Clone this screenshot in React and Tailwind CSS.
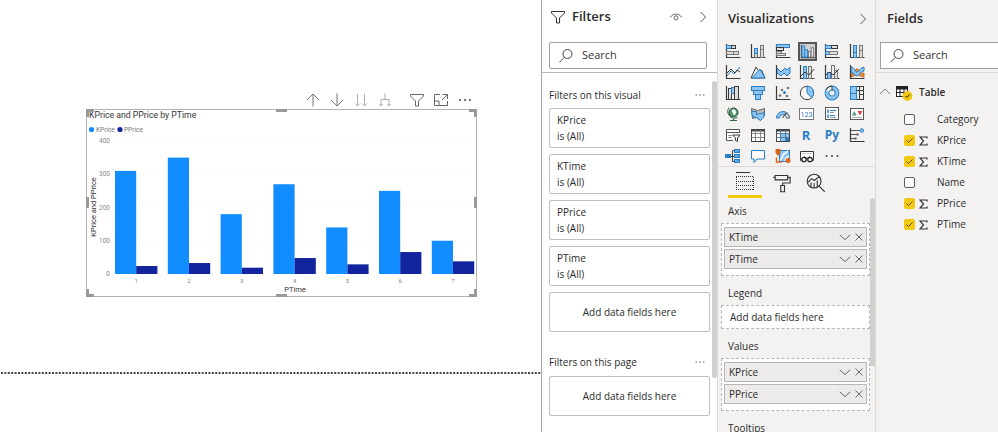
import React, { useState } from "react";

const INK = "#3a3a3a";
const BLUE = "#2a7fc4";
const SKY = "#8cc4f2";
const GREY = "#bdbab7";

/* ---------- chart data ---------- */

const DATA = [
  { time: 1, k: 310, p: 24 },
  { time: 2, k: 350, p: 33 },
  { time: 3, k: 180, p: 19 },
  { time: 4, k: 270, p: 48 },
  { time: 5, k: 140, p: 29 },
  { time: 6, k: 250, p: 66 },
  { time: 7, k: 100, p: 38 },
];

const BASE = 165;
const scale = (v) => (v * 133) / 400;

function Chart() {
  return (
    <svg viewBox="0 0 391 188" className="block w-full" role="img" aria-label="KPrice and PPrice by PTime" fontFamily="Roboto, sans-serif">
      <rect x="0.5" y="0.5" width="390" height="187" fill="white" stroke="#b3b3b3" />
      <text x="3" y="9" fontSize="8.7" fill="#333">KPrice and PPrice by PTime</text>
      <circle cx="5.500" cy="20.500" r="2.600" fill="#118dff" />
      <text x="10" y="23" fontSize="6.500" fill="#777">KPrice</text>
      <circle cx="34" cy="20.500" r="2.600" fill="#12239e" />
      <text x="38" y="23" fontSize="6.500" fill="#777">PPrice</text>
      {[0, 100, 200, 300, 400].map((v) => (
        <g key={v}>
          {v > 0 && <line x1="29" x2="388" y1={BASE - scale(v)} y2={BASE - scale(v)} stroke="#ededed" strokeDasharray="1 3" />}
          <text x="24" y={BASE - scale(v) + 2} fontSize="6.500" fill="#888" textAnchor="end">{v}</text>
        </g>
      ))}
      {DATA.map((d, i) => {
        const x = 29 + i * 52.8;
        return (
          <g key={d.time}>
            <rect x={x} y={BASE - scale(d.k)} width="21.200" height={scale(d.k)} fill="#118dff" />
            <rect x={x + 21.2} y={BASE - scale(d.p)} width="21.200" height={scale(d.p)} fill="#12239e" />
            <text x={x + 21.2} y="174" fontSize="6" fill="#888" textAnchor="middle">{d.time}</text>
          </g>
        );
      })}
      <text x="209" y="183" fontSize="7.500" fill="#333" textAnchor="middle">PTime</text>
      <text transform="translate(9.500 98) rotate(-90)" fontSize="7.500" fill="#333" textAnchor="middle">KPrice and PPrice</text>
      <g fill="#999">
        <path d="M0 0h8v3H3v5H0zM391 0h-8v3h5v5h3zM0 188h8v-3H3v-5H0zM391 188h-8v-3h5v-5h3z" />
        <rect x="190" y="0" width="11" height="3" />
        <rect x="190" y="185" width="11" height="3" />
        <rect x="0" y="88" width="3" height="11" />
        <rect x="388" y="88" width="3" height="11" />
      </g>
    </svg>
  );
}

/* ---------- small glyphs ---------- */

function Glyph({ children, className = "size-4", color = "#555", width = 1 }) {
  return (
    <svg viewBox="0 0 16 16" className={`block shrink-0 ${className}`} fill="none" stroke={color} strokeWidth={width} aria-hidden="true">
      {children}
    </svg>
  );
}

const Funnel = (props) => (
  <Glyph {...props}>
    <path d="M1.500 2.500h13v1.500L9.500 9v5h-3V9L1.500 4z" />
  </Glyph>
);
const Magnifier = () => (
  <Glyph className="size-4" color="#444">
    <circle cx="9.500" cy="6" r="4.500" />
    <path d="M6.300 9.300L1.500 14.200" />
  </Glyph>
);
const Dots = ({ color = "#777", className = "size-4" }) => (
  <Glyph color="none" className={className}>
    <g fill={color}>
      <circle cx="3" cy="8" r="1.100" />
      <circle cx="8" cy="8" r="1.100" />
      <circle cx="13" cy="8" r="1.100" />
    </g>
  </Glyph>
);
const ChevronRight = () => (
  <Glyph color="#555" className="size-4">
    <path d="M5.500 3l5 5-5 5" />
  </Glyph>
);

const VISUAL_TOOLS = [
  ["Drill up", <Glyph key="a" color="#777"><path d="M8 14.500V2M2 8l6-6 6 6" /></Glyph>],
  ["Drill down", <Glyph key="b" color="#777"><path d="M8 1.500V14M2 8l6 6 6-6" /></Glyph>],
  ["Next level", <Glyph key="c" color="#b0b0b0"><path d="M4.500 2v12M2 11.500L4.500 14 7 11.500M11.500 2v12M9 11.500l2.500 2.500 2.500-2.500" /></Glyph>],
  ["Expand all", <Glyph key="d" color="#b0b0b0"><path d="M8 1.500v6M4 14V7.500h8V14M2 12l2 2 2-2M10 12l2 2 2-2" /></Glyph>],
];

/* ---------- visualization icons ---------- */

const axes = <path d="M1.500 1v13.500H15.500" stroke={INK} strokeWidth="1.200" />;

const VISUALS = [
  ["Stacked bar chart", <>{axes}<rect x="1.500" y="2.500" width="5" height="3" fill={SKY} stroke={BLUE} /><rect x="6.500" y="2.500" width="4" height="3" fill="#ddd" stroke={INK} /><rect x="1.500" y="8.500" width="7" height="3" fill="#ddd" stroke="#777" /><rect x="8.500" y="8.500" width="5" height="3" fill="#ddd" stroke="#777" /></>],
  ["Stacked column chart", <>{axes}<rect x="4.500" y="9.500" width="3" height="5" fill="#ddd" stroke="#666" /><rect x="4.500" y="5.500" width="3" height="5" fill={SKY} stroke={BLUE} /><rect x="10.500" y="6.500" width="3" height="8" fill="#ddd" stroke="#777" /><rect x="10.500" y="2.500" width="3" height="4" fill="#ddd" stroke="#777" /></>],
  ["Clustered bar chart", <>{axes}<rect x="1.500" y="1.500" width="13" height="3" fill={SKY} stroke={BLUE} /><rect x="1.500" y="4.500" width="7" height="3" fill="#ddd" stroke={INK} /><rect x="1.500" y="8.500" width="5" height="2" fill="#ddd" stroke="#777" /><rect x="1.500" y="10.500" width="9" height="2" fill="#ddd" stroke="#777" /></>],
  ["Clustered column chart", <>{axes}<rect x="2" y="2" width="3" height="12" fill={SKY} stroke={BLUE} /><rect x="5" y="6" width="3" height="8" fill={SKY} stroke={BLUE} /><rect x="9" y="8" width="2.500" height="6" fill="#eee" stroke="#777" /><rect x="12" y="4" width="2.500" height="10" fill="#eee" stroke="#777" /></>],
  ["100% stacked bar chart", <>{axes}<rect x="1.500" y="2.500" width="6" height="3" fill={SKY} stroke={BLUE} /><rect x="7.500" y="2.500" width="6" height="3" fill="#ddd" stroke={INK} /><rect x="1.500" y="8.500" width="4" height="3" fill={SKY} stroke={BLUE} /><rect x="5.500" y="8.500" width="8" height="3" fill="#ddd" stroke="#777" /></>],
  ["100% stacked column chart", <>{axes}<rect x="4.500" y="2.500" width="3" height="7" fill={SKY} stroke={BLUE} /><rect x="4.500" y="9.500" width="3" height="5" fill={SKY} stroke={BLUE} /><rect x="10.500" y="2.500" width="3" height="5" fill="#ddd" stroke="#777" /><rect x="10.500" y="7.500" width="3" height="7" fill="#ddd" stroke="#777" /></>],
  ["Line chart", <>{axes}<path d="M2 12l4-5 3 3 6-7" stroke={BLUE} /><path d="M2 9l4-4 4 4 2-3 3 2" stroke={INK} /></>],
  ["Area chart", <><path d="M1 14L6 3l4 6 1.500-3L15 14z" fill="#f4f4f4" stroke={INK} /><path d="M2 14l8-9 5 9z" fill={SKY} stroke={BLUE} /></>],
  ["Stacked area chart", <><path d="M2 4l4 4 4-4 2 2 3-3v6l-3 3-3-3-3 3-4-3z" fill={SKY} stroke={BLUE} />{axes}</>],
  ["Line and stacked column chart", <>{axes}<rect x="4.500" y="2.500" width="3" height="12" fill={SKY} stroke={BLUE} /><rect x="9.500" y="2.500" width="3" height="12" fill="#ddd" stroke="#777" /><path d="M2 12l4-4 4 3 5-6" stroke={INK} /></>],
  ["Line and clustered column chart", <>{axes}<rect x="3.500" y="8.500" width="3" height="6" fill={SKY} stroke={BLUE} /><rect x="7.500" y="1.500" width="3" height="13" fill="#eee" stroke="#777" /><rect x="10.500" y="6.500" width="3" height="8" fill="#ddd" stroke="#777" /><path d="M2 11l3-3 4 3 6-6" stroke={INK} /></>],
  ["Ribbon chart", <><path d="M2 10c4 0 3-5 6-5s3 5 7 4v4c-4 0-5-3-7-3s-3 3-6 3z" fill="#e8913a" stroke="#c4661f" /><path d="M2 3c4 0 3 5 6 5s3-5 7-5v4c-4 0-4 5-7 5s-3-4-6-4z" fill={SKY} stroke={BLUE} />{axes}</>],
  ["Waterfall chart", <>{axes}<rect x="3.500" y="3.500" width="3" height="11" fill="#ddd" stroke={INK} /><rect x="6.500" y="2.500" width="3" height="6" fill={SKY} stroke={BLUE} /><rect x="9.500" y="1.500" width="4" height="13" fill="#ddd" stroke={INK} /></>],
  ["Funnel chart", <g fill={SKY} stroke={BLUE}><rect x="1.500" y="1.500" width="13" height="4" /><rect x="3.500" y="5.500" width="9" height="4" /><rect x="5.500" y="9.500" width="5" height="5" /></g>],
  ["Scatter chart", <>{axes}<g stroke="none" fill="#777"><circle cx="5" cy="10.500" r="1.300" /><circle cx="7" cy="5" r="1.300" /><circle cx="13" cy="3" r="1.300" /><circle cx="12" cy="11" r="1.300" /></g><circle cx="9.500" cy="7.500" r="1.500" fill={BLUE} stroke="none" /></>],
  ["Pie chart", <><circle cx="8" cy="8" r="6.700" fill="#f8f8f8" stroke={INK} /><path d="M8 8V1.300a6.700 6.700 0 014.700 11.400z" fill={SKY} stroke={BLUE} /></>],
  ["Donut chart", <><circle cx="8" cy="8" r="5" stroke={BLUE} strokeWidth="4.800" /><circle cx="8" cy="8" r="5" stroke={SKY} strokeWidth="2.800" /><path d="M3.500 6A5 5 0 018 3" stroke="#eee" strokeWidth="3" /><path d="M1.800 5A7 7 0 018 1M8 1v4.500" stroke={INK} /></>],
  ["Treemap", <><rect x="1.500" y="1.500" width="13" height="13" fill="#eee" stroke={INK} /><rect x="1.500" y="1.500" width="6" height="7" fill={SKY} stroke={BLUE} /><rect x="1.500" y="8.500" width="6" height="6" fill={SKY} stroke={BLUE} /><path d="M7.500 5.500h7M10.500 5.500V1.500M10.500 9.500h4M10.500 5.500v9" stroke={INK} /></>],
  ["Map", <><circle cx="8.500" cy="6.500" r="4.500" fill="#4f9e70" stroke={INK} /><path d="M7 4c2-1 4 0 4 2s-1 3-2 3 0-2-2-3z" fill="#fff" stroke="none" /><path d="M4 1.500a6.800 6.800 0 008.500 10M8.500 13v2M5 14.500h7" stroke="#2f6b4a" /></>],
  ["Filled map", <><path d="M1.500 2.500l6 2 7-2v7l-4 5-4-3-4 1z" fill={GREY} stroke="#666" /><path d="M1.500 5.500h5v3l8-2-1 5-3 3-4-3-4-1z" fill={SKY} stroke={BLUE} /></>],
  ["Gauge", <><path d="M1.500 12a6.500 6.500 0 0113 0h-3a3.500 3.500 0 00-7 0z" fill={SKY} stroke={BLUE} /><path d="M12 6.500l2.500 5.500h-3c0-1-.5-2-1-2.500z" fill="#eee" stroke="#777" /><path d="M7.500 12l3.500-5" stroke={INK} /></>],
  ["Card", <><rect x="0.500" y="2.500" width="14" height="11" fill="#fff" stroke="#777" /><text x="7.500" y="10.500" fontSize="7" textAnchor="middle" fill={BLUE} stroke="none" fontFamily="Roboto, sans-serif">123</text></>],
  ["Multi-row card", <><rect x="1.500" y="1.500" width="13" height="12" fill="#fff" stroke="#555" /><path d="M4 3.500v3.500M4 8.500V12" stroke={BLUE} strokeWidth="1.500" /><path d="M6 4.500h6M6 9.500h5" stroke={BLUE} /><path d="M6 6.500h4M6 11.500h6" stroke="#999" /></>],
  ["KPI", <><rect x="1.500" y="2.500" width="13" height="11" fill="#fff" stroke="#555" /><path d="M3 9.500L5.300 5l2.300 4.500z" fill="#4d9e72" stroke="none" /><path d="M8.500 5h5L11 9.500z" fill="#d64545" stroke="none" /><path d="M3 11.500h10" stroke="#aaa" /></>],
  ["Slicer", <><path d="M8 13.500H1.500v-11h13V6" fill="#fff" stroke="#555" /><path d="M1.500 5.500h13" stroke="#555" /><path d="M3.500 8.500h3M3.500 10.500h3" stroke="#777" /><path d="M7.500 8h7.500l-2.500 3v3.500l-2-1V11z" fill="#fff" stroke={INK} /></>],
  ["Table", <><rect x="1.500" y="2.500" width="13" height="12" fill="#fff" stroke="#444" /><path d="M1.500 3.500h13" stroke="#444" strokeWidth="2" /><path d="M1.500 6.500h13M1.500 10.500h13M5.500 3v11M10.500 3v11" stroke="#888" /></>],
  ["Matrix", <><rect x="1.500" y="2.500" width="13" height="12" fill="#fff" stroke="#444" /><rect x="6" y="7" width="8" height="7" fill={SKY} stroke="none" /><rect x="10" y="10" width="4" height="4" fill={BLUE} stroke="none" /><path d="M1.500 3.500h13" stroke="#444" strokeWidth="2" /><path d="M1.500 6.500h13M1.500 10.500h13M5.500 3v11M10.500 3v11" stroke="#55799a" /></>],
  ["R script visual", <text x="7" y="13" fontSize="13" fontWeight="700" textAnchor="middle" fill={BLUE} stroke="none" fontFamily="'Open Sans', sans-serif">R</text>],
  ["Python visual", <text x="8" y="12" fontSize="12" fontWeight="700" textAnchor="middle" fill={BLUE} stroke="none" fontFamily="'Open Sans', sans-serif">Py</text>],
  ["Key influencers", <>{axes}<path d="M2 3.500h9M2 7.500h6M2 11.500h4" stroke="#555" /><circle cx="12.800" cy="3.500" r="1.800" fill={SKY} stroke={BLUE} /><circle cx="8.500" cy="7.500" r="1.200" fill="#666" stroke="none" /><circle cx="6.500" cy="11.500" r="1.200" fill="#666" stroke="none" /></>],
  ["Decomposition tree", <><path d="M5 8.500h5M7.500 3v10.500M7.500 2.500H10M7.500 13.500H10" stroke={INK} /><rect x="0.500" y="6.500" width="5" height="3" fill={BLUE} stroke={BLUE} /><g fill="#5ba6e0" stroke={BLUE}><rect x="9.500" y="1.500" width="5" height="3" /><rect x="9.500" y="6.500" width="5" height="3" /><rect x="9.500" y="11.500" width="5" height="3" /></g></>],
  ["Q&A", <path d="M1.500 2.500h13v8.500H7l-3 3.500V11H1.500z" fill="#fff" stroke={BLUE} />],
  ["ArcGIS map", <><rect x="4.500" y="2.500" width="10" height="11" fill={SKY} stroke={BLUE} /><path d="M5 12c3-1 2-5 4-6s2-2 4-3M10 13c0-3 2-4 4-5" stroke="#fff" strokeWidth="1.500" /><path d="M0.500 1h5v4L3 8 0.500 5z" fill="#d9651a" stroke="none" /><path d="M1.500 9.500v4.500H7" stroke="#d9651a" strokeWidth="1.500" /><circle cx="13" cy="12.500" r="2.500" fill="#d9651a" stroke="none" /></>],
  ["Paginated report", <><path d="M2.500 12.500h-1v-9h13v9h-1" fill="#fff" stroke={INK} /><path d="M3 5.500h10" stroke="#ccc" /><circle cx="5" cy="11.500" r="2.200" fill="#fff" stroke="#222" strokeWidth="1.300" /><circle cx="11" cy="11.500" r="2.200" fill="#fff" stroke="#222" strokeWidth="1.300" /><path d="M5 8.500l3 2 3-2" stroke="#222" /></>],
  ["More visuals", <g fill="#333" stroke="none"><circle cx="2.500" cy="8" r="0.900" /><circle cx="8" cy="8" r="0.900" /><circle cx="13.500" cy="8" r="0.900" /></g>],
];

/* ---------- panes ---------- */

function SearchBox({ id, className }) {
  return (
    <label htmlFor={id} className={`flex h-[27px] items-center gap-2 border border-[#a19f9d] bg-white pl-2 ${className}`}>
      <Magnifier />
      <input id={id} type="search" aria-label="Search" placeholder="Search" className="w-full min-w-0 bg-transparent text-[11px] outline-none placeholder:text-[#333]" />
    </label>
  );
}

function FilterHeading({ children }) {
  return (
    <div className="flex h-5 items-center justify-between">
      <h3>{children}</h3>
      <button type="button" aria-label={`${children} options`} className="pr-1"><Dots className="size-3" /></button>
    </div>
  );
}

const DropCard = () => (
  <div className="flex h-10 items-center justify-center rounded-xs border border-[#c0bebc]">Add data fields here</div>
);

function FiltersPane() {
  return (
    <section className="flex w-[176px] shrink-0 flex-col border-l border-[#a6a6a6] bg-white">
      <header className="flex h-[42px] items-center gap-1 pr-1.5 pb-2 pl-2">
        <Funnel color="#333" />
        <h2 className="flex-1 pl-0.5 text-[13px] font-semibold">Filters</h2>
        <button type="button" aria-label="Show filter pane to readers" className="pr-2">
          <Glyph className="size-3.5">
            <path d="M1.500 8.500c2.500-5 10.500-5 13 0" />
            <circle cx="8" cy="9" r="2.300" />
          </Glyph>
        </button>
        <button type="button" aria-label="Collapse filters"><ChevronRight /></button>
      </header>
      <div className="border-b border-[#b8b6b4] pr-2.5 pb-[3px] pl-[7px]">
        <SearchBox id="filter-search" className="rounded-xs" />
      </div>
      <div className="flex min-h-0 flex-1 pl-[7px]">
        <div className="flex-1 pt-3">
          <FilterHeading>Filters on this visual</FilterHeading>
          <div className="flex flex-col gap-1.5 pt-[3px]">
            {["KPrice", "KTime", "PPrice", "PTime"].map((name) => (
              <button type="button" key={name} className="h-10 rounded-xs border border-[#c0bebc] pl-[7px] text-left leading-4">
                <span className="block">{name}</span>
                <span className="block">is (All)</span>
              </button>
            ))}
            <DropCard />
          </div>
          <div className="pt-5">
            <FilterHeading>Filters on this page</FilterHeading>
            <div className="pt-1"><DropCard /></div>
          </div>
        </div>
        <div className="w-[7px] pt-2 pl-0.5"><div className="h-[297px] rounded-full bg-[#d2d0ce]" /></div>
      </div>
    </section>
  );
}

function Well({ label, fields }) {
  return (
    <div>
      <h3 className="flex h-[29px] items-center pt-1.5 pl-[7px]">{label}</h3>
      {fields ? (
        <ul className="flex h-[53px] flex-col gap-0.5 border border-dashed border-[#b8b6b4] bg-white px-0.5 pt-[3px]">
          {fields.map((name) => (
            <li key={name} className="flex h-5 items-center border border-[#b8b6b4] bg-[#edebe9] pl-1">
              <span className="flex-1">{name}</span>
              <button type="button" aria-label={`${name} menu`}>
                <Glyph className="size-3.5"><path d="M2 5.500l6 5.500 6-5.500" /></Glyph>
              </button>
              <button type="button" aria-label={`Remove ${name}`}>
                <Glyph className="size-3.5"><path d="M4 4l8 8M12 4l-8 8" /></Glyph>
              </button>
            </li>
          ))}
        </ul>
      ) : (
        <div className="flex h-6 items-center border border-dashed border-[#b8b6b4] bg-white pl-2">Add data fields here</div>
      )}
    </div>
  );
}

function VisualizationsPane() {
  return (
    <section className="flex w-[159px] shrink-0 flex-col border-x border-[#dddbd9] bg-[#f3f2f1]">
      <header className="flex h-[41px] items-center justify-between pr-1 pb-1 pl-2.5">
        <h2 className="text-[13px] font-semibold">Visualizations</h2>
        <button type="button" aria-label="Collapse visualizations"><ChevronRight /></button>
      </header>
      <div className="grid h-[126px] grid-cols-6 border-b border-[#dddbd9] pr-1.5 pl-[3px]">
        {VISUALS.map(([name, art]) => (
          <button
            type="button"
            key={name}
            aria-label={name}
            className={`m-auto flex size-[19px] items-center justify-center ${name === "Clustered column chart" ? "border-2 border-[#555] bg-[#d2d0ce]" : ""}`}
          >
            <Glyph className={name === "Clustered column chart" ? "size-[15px]" : "size-4"}>{art}</Glyph>
          </button>
        ))}
      </div>
      <div className="flex h-[31px] gap-2 pl-2.5">
        <button type="button" aria-label="Fields" className="flex w-[34px] flex-col items-center justify-between border-b-3 border-[#f2c811] pt-1">
          <svg viewBox="0 0 20 20" className="size-5" fill="none" stroke="#333" aria-hidden="true">
            <path d="M1 1.500h14" />
            <path d="M1 5.500h18M1 10.500h18M1 14.500h18M1 18.500h18M1.500 6v13M18.500 6v13" strokeDasharray="1 1" />
          </svg>
        </button>
        <button type="button" aria-label="Format" className="px-0.5">
          <Glyph className="size-5" color="#333" width={0.9}>
            <path d="M2.500 2h10v3.500h-10zM12.500 3.500h2v4.500h-6v2M7 10h3v5H7zM1 3.500h1.500" />
          </Glyph>
        </button>
        <button type="button" aria-label="Analytics" className="px-1">
          <Glyph className="size-5" color="#333" width={0.9}>
            <circle cx="6.500" cy="6.500" r="5.500" />
            <path d="M10.500 10.500L15 15M1.500 7.500l3-3 2 1.500 4-3M4 11V7.500M6.500 12V8M9 11V6" />
          </Glyph>
        </button>
      </div>
      <div className="flex min-h-0 flex-1 pl-[3px]">
        <div className="-mt-1 flex-1">
          <Well label="Axis" fields={["KTime", "PTime"]} />
          <Well label="Legend" />
          <Well label="Values" fields={["KPrice", "PPrice"]} />
          <Well label="Tooltips" />
        </div>
        <div className="w-[5px]"><div className="h-[168px] rounded-t-full bg-[#d2d0ce]" /></div>
      </div>
    </section>
  );
}

const FIELDS = [
  ["Category", false],
  ["KPrice", true],
  ["KTime", true],
  ["Name", false],
  ["PPrice", true],
  ["PTime", true],
];

function FieldRow({ name, initial }) {
  const [on, setOn] = useState(initial);
  return (
    <li>
      <label className="flex h-[21px] items-center">
        <span className="grid size-[11px] place-items-center">
          <input
            type="checkbox"
            checked={on}
            onChange={() => setOn(!on)}
            className="col-start-1 row-start-1 size-[11px] appearance-none rounded-xs border border-[#605e5c] bg-white checked:border-[#f2c811] checked:bg-[#f2c811]"
          />
          {on && (
            <svg viewBox="0 0 11 11" className="pointer-events-none col-start-1 row-start-1 size-[11px]" fill="none" stroke="#5c4d0a">
              <path d="M2.500 5.500l2 2 4-4" />
            </svg>
          )}
        </span>
        <span className="flex w-[22px] pl-1">
          {initial && (
            <svg viewBox="0 0 9 10" className="h-2.5 w-[9px]" fill="none" stroke="#333" strokeWidth="1.200" aria-hidden="true">
              <path d="M8 2.500V1H1l3.500 4L1 9h7V7.500" />
            </svg>
          )}
        </span>
        {name}
      </label>
    </li>
  );
}

function FieldsPane() {
  return (
    <section className="flex w-[122px] shrink-0 flex-col overflow-hidden bg-[#f3f2f1]">
      <h2 className="flex h-[42px] items-center pb-1 pl-[11px] text-[13px] font-semibold">Fields</h2>
      <div className="border-b border-[#dddbd9] pb-[3px] pl-1">
        <SearchBox id="field-search" className="border-r-0" />
      </div>
      <div className="pt-2">
        <button type="button" className="flex h-[22px] items-center pl-[3px] font-semibold">
          <Glyph className="size-3"><path d="M1 11l7-7 7 7" /></Glyph>
          <svg viewBox="0 0 18 18" className="ml-1 size-[18px]" fill="none" aria-hidden="true">
            <rect x="1.500" y="3.500" width="11" height="10" fill="#fff" stroke="#222" />
            <path d="M1 4h12v2.500H1z" fill="#222" />
            <path d="M1 9.500h12M5 6v8M9 6v8" stroke="#222" />
            <circle cx="12.500" cy="13" r="4.900" fill="#f2c811" />
            <path d="M10.500 13l1.500 1.500 2.700-3" stroke="#222" />
          </svg>
          <span className="pl-1.5">Table</span>
        </button>
        <ul className="pt-1.5 pl-7">
          {FIELDS.map(([name, on]) => <FieldRow key={name} name={name} initial={on} />)}
        </ul>
      </div>
    </section>
  );
}

export default function App() {
  return (
    <main className="flex h-screen overflow-hidden bg-white font-['Open_Sans','Noto_Sans',sans-serif] text-[10px] text-[#2b2b2b]">
      <section className="flex min-w-0 flex-1 flex-col">
        <div className="h-[372px] pt-[90px] pl-[86px]">
          <div className="w-[391px]">
            <div className="flex h-[19px] items-center justify-end gap-2 pr-1">
              {VISUAL_TOOLS.map(([name, art]) => (
                <button type="button" key={name} aria-label={name}>{art}</button>
              ))}
              <button type="button" aria-label="Filters on visual" className="pl-2"><Funnel color="#666" /></button>
              <button type="button" aria-label="Focus mode">
                <Glyph color="#666"><path d="M7 2.500H1.500v11h13V9M9.500 2.500h5V7M14.500 2.500L9 8M1.500 9H6v4.500" /></Glyph>
              </button>
              <button type="button" aria-label="More options"><Dots color="#555" /></button>
            </div>
            <Chart />
          </div>
        </div>
        <svg className="h-0.5 w-full" aria-hidden="true">
          <line x1="1" x2="100%" y1="1" y2="1" stroke="#444" strokeWidth="2" strokeDasharray="2 1.400" />
        </svg>
      </section>
      <FiltersPane />
      <VisualizationsPane />
      <FieldsPane />
    </main>
  );
}
